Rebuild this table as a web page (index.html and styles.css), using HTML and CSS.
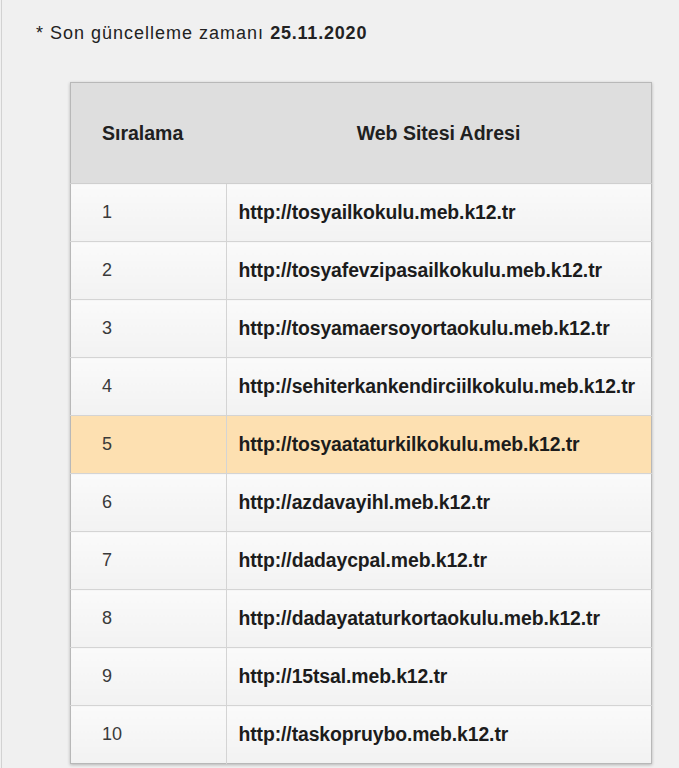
FILE: index.html
```html
<!DOCTYPE html>
<html lang="tr">
<head>
<meta charset="utf-8">
<title>Sıralama</title>
<link rel="stylesheet" href="styles.css">
</head>
<body>
<div class="page">
  <p class="note">* Son güncelleme zamanı <b>25.11.2020</b></p>
  <table class="rank">
    <thead>
      <tr><th class="c-rank">Sıralama</th><th class="c-url">Web Sitesi Adresi</th></tr>
    </thead>
    <tbody>
      <tr><td class="num">1</td><td class="url">http://tosyailkokulu.meb.k12.tr</td></tr>
      <tr><td class="num">2</td><td class="url">http://tosyafevzipasailkokulu.meb.k12.tr</td></tr>
      <tr><td class="num">3</td><td class="url">http://tosyamaersoyortaokulu.meb.k12.tr</td></tr>
      <tr><td class="num">4</td><td class="url">http://sehiterkankendirciilkokulu.meb.k12.tr</td></tr>
      <tr class="hl"><td class="num">5</td><td class="url">http://tosyaataturkilkokulu.meb.k12.tr</td></tr>
      <tr><td class="num">6</td><td class="url">http://azdavayihl.meb.k12.tr</td></tr>
      <tr><td class="num">7</td><td class="url">http://dadaycpal.meb.k12.tr</td></tr>
      <tr><td class="num">8</td><td class="url">http://dadayataturkortaokulu.meb.k12.tr</td></tr>
      <tr><td class="num">9</td><td class="url">http://15tsal.meb.k12.tr</td></tr>
      <tr><td class="num">10</td><td class="url">http://taskopruybo.meb.k12.tr</td></tr>
    </tbody>
  </table>
</div>
</body>
</html>
```
FILE: styles.css
```css
html, body {
  margin: 0;
  padding: 0;
  background: #f0f0f0;
}
body {
  font-family: "Liberation Sans", Arial, sans-serif;
  color: #1e1e1e;
}
.page {
  margin-left: 1px;
  border-left: 1px solid #d2d2d2;
  min-height: 768px;
  padding-top: 21px;
  box-sizing: border-box;
}
.note {
  margin: 0 0 0 34px;
  font-size: 18px;
  letter-spacing: 1px;
  line-height: 24px;
  color: #222;
}
.note b {
  letter-spacing: 0.8px;
}
.rank {
  margin: 37px 0 0 68px;
  width: 582px;
  border-collapse: collapse;
  border: 1px solid #b8b8b8;
  box-shadow: 0 1px 3px rgba(0,0,0,0.25);
  background: #f7f7f7;
}
.rank th {
  height: 100px;
  background: #dedede;
  font-size: 19.5px;
  font-weight: bold;
  padding: 0;
  border-bottom: 1px solid #cfcfcf;
  color: #202020;
}
.rank th.c-rank {
  width: 124px;
  text-align: left;
  padding-left: 31px;
}
.rank th.c-url {
  text-align: center;
}
.rank td {
  height: 57px;
  padding: 0;
  border-bottom: 1px solid #d4d4d4;
  background: linear-gradient(#fafafa, #f2f2f2);
}
.rank td.num {
  padding-left: 31px;
  font-size: 18px;
  color: #3a3a3a;
  border-right: 1px solid #d4d4d4;
}
.rank td.url {
  padding-left: 12px;
  font-size: 19.4px;
  font-weight: bold;
  color: #1c1c1c;
  letter-spacing: -0.1px;
}
.rank tr.hl td {
  background: #fde0b1;
}
.rank tbody tr:last-child td {
  border-bottom: none;
}
```
